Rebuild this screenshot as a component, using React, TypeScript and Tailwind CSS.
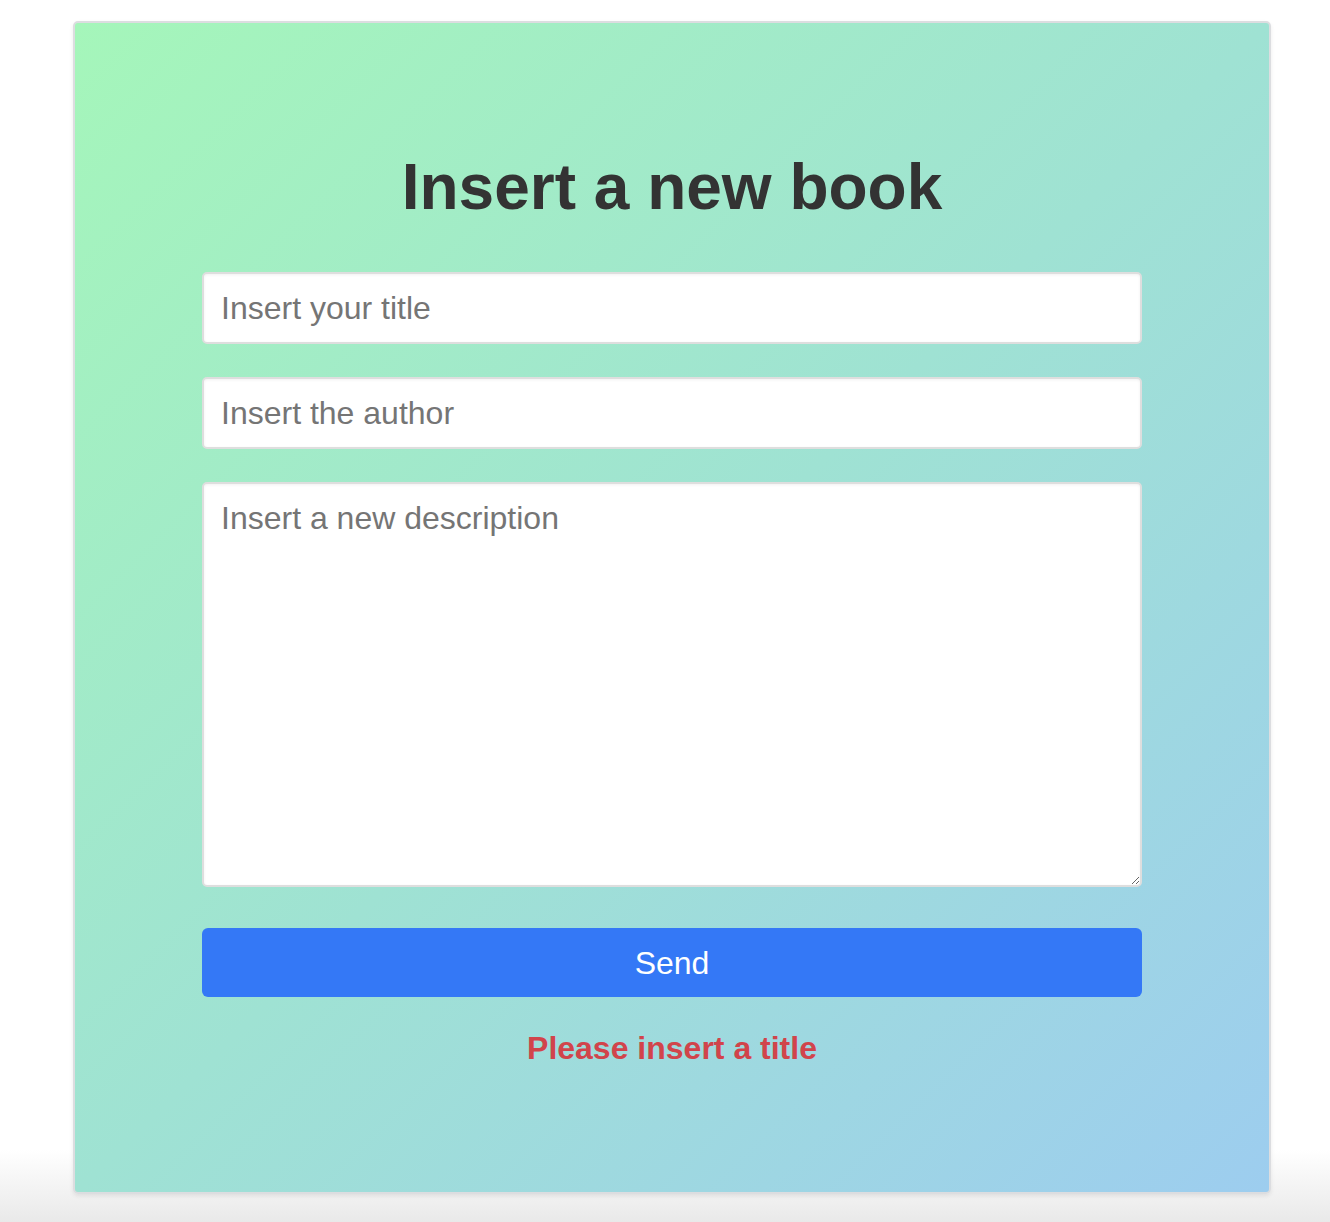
import { useState } from "react";

const fieldClass =
  "w-full rounded-[5px] border-2 border-[#dedede] bg-white px-[17px] py-[16px] text-[32px] leading-[36px] text-[#333] placeholder:text-[#757575] outline-none shadow-[inset_0_1px_3px_rgba(0,0,0,0.06)]";

const App = () => {
  const [title, setTitle] = useState("");
  const [author, setAuthor] = useState("");
  const [description, setDescription] = useState("");
  const [error] = useState("Please insert a title");

  return (
    <div
      className="min-h-[1222px] pt-[21px] pl-[73px] bg-[linear-gradient(to_bottom,#ffffff_1150px,#e9e9e9_1222px)]"
      style={{ fontFamily: '"Liberation Sans", Arial, sans-serif' }}
    >
      <div className="w-[1198px] h-[1173px] rounded-[5px] border-2 border-[#dcdde0] shadow-[0_2px_4px_rgba(0,0,0,0.08)] bg-[linear-gradient(to_bottom_right,#a5f6ba,#9fe2d3_50%,#9dcdef)] flex flex-col items-center">
        <h1 className="mt-[132px] text-[64px] leading-none font-bold text-[#333333]">
          Insert a new book
        </h1>

        <form
          className="mt-[53px] w-[940px] flex flex-col gap-[33px]"
          onSubmit={(e) => e.preventDefault()}
        >
          <input
            className={fieldClass + " h-[72px]"}
            placeholder="Insert your title"
            value={title}
            onChange={(e) => setTitle(e.target.value)}
          />
          <input
            className={fieldClass + " h-[72px]"}
            placeholder="Insert the author"
            value={author}
            onChange={(e) => setAuthor(e.target.value)}
          />
          <textarea
            className={fieldClass + " h-[405px] block"}
            placeholder="Insert a new description"
            value={description}
            onChange={(e) => setDescription(e.target.value)}
          />
          <button
            type="submit"
            className="mt-[8px] h-[69px] w-full rounded-[6px] bg-[#3478f6] text-white text-[32px] leading-none"
          >
            Send
          </button>
        </form>

        {error && (
          <p className="mt-[27px] text-[32px] font-bold text-[#d1444b]">
            {error}
          </p>
        )}
      </div>
    </div>
  );
};

export default App;
